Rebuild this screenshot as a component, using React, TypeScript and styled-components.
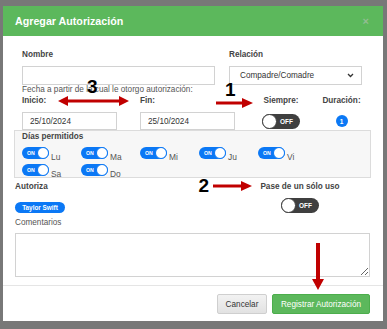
import React from "react";
import styled, { createGlobalStyle } from "styled-components";

const GlobalStyle = createGlobalStyle`
  html, body {
    margin: 0;
    padding: 0;
    background: #787878;
  }
  body {
    font-family: "Liberation Sans", Arial, sans-serif;
  }
  * {
    box-sizing: border-box;
  }
`;

const Backdrop = styled.div`
  position: relative;
  width: 387px;
  height: 329px;
  background: #787878;
  padding: 6px 0 0 3px;
  overflow: hidden;
`;

const Modal = styled.div`
  width: 380px;
  height: 315px;
  background: #fff;
  display: flex;
  flex-direction: column;
`;

const Header = styled.div`
  height: 30px;
  flex: none;
  background: #5cb85c;
  display: flex;
  align-items: center;
  justify-content: space-between;
  padding: 0 14px 0 12px;
`;

const Title = styled.h4`
  margin: 0;
  font-size: 10.7px;
  font-weight: 700;
  color: #fff;
`;

const Close = styled.span`
  font-size: 11px;
  font-weight: 700;
  color: #93bd93;
  line-height: 1;
`;

const Body = styled.div`
  flex: 1;
  padding: 13px 13px 0 12px;
  display: flex;
  flex-direction: column;
`;

const Top = styled.div`
  padding: 0 8px 0 7px;
`;

const NameRow = styled.div`
  display: grid;
  grid-template-columns: 193px 133px;
  column-gap: 14px;
`;

const Label = styled.label<{ $center?: boolean; $light?: boolean }>`
  display: block;
  font-size: 8.2px;
  line-height: 11px;
  font-weight: ${({ $light }) => ($light ? 400 : 700)};
  color: ${({ $light }) => ($light ? "#555" : "#444")};
  text-align: ${({ $center }) => ($center ? "center" : "left")};
`;

const Input = styled.div<{ $h: number; $w?: number }>`
  height: ${({ $h }) => $h}px;
  width: ${({ $w }) => ($w ? `${$w}px` : "100%")};
  border: 1px solid #d2d2d2;
  background: #fff;
  font-size: 8.2px;
  color: #333;
  display: flex;
  align-items: center;
  padding: 0 7px;
`;

const Select = styled(Input)`
  justify-content: space-between;
  padding: 0 7px 0 10px;
`;

const Stack = styled.div<{ $gap: number }>`
  display: flex;
  flex-direction: column;
  align-items: stretch;
  gap: ${({ $gap }) => $gap}px;
`;

const Note = styled.div`
  font-size: 8.2px;
  line-height: 10px;
  color: #555;
`;

const DateRow = styled.div`
  display: grid;
  grid-template-columns: 118px 101px 80px 41px;
  align-items: start;
`;

const Centered = styled.div`
  display: flex;
  justify-content: center;
  align-items: center;
  height: 18px;
`;

const Switch = styled.div<{ $on?: boolean; $size?: "sm" | "md" }>`
  position: relative;
  width: ${({ $size }) => ($size === "sm" ? 27 : 38)}px;
  height: ${({ $size }) => ($size === "sm" ? 12 : 15)}px;
  border-radius: 8px;
  background: ${({ $on }) => ($on ? "#0b78f5" : "#3f3f3f")};
  flex: none;
  display: flex;
  align-items: center;
  justify-content: ${({ $on }) => ($on ? "flex-start" : "flex-end")};
  padding: ${({ $on, $size }) =>
    $on ? "0 0 0 5px" : $size === "sm" ? "0 5px 0 0" : "0 7px 0 0"};
  font-size: ${({ $size }) => ($size === "sm" ? 5.2 : 6.5)}px;
  font-weight: 700;
  color: #fff;
`;

const Knob = styled.span<{ $on?: boolean; $size?: "sm" | "md" }>`
  position: absolute;
  top: 0;
  ${({ $on }) => ($on ? "right: 0;" : "left: 0;")}
  width: ${({ $size }) => ($size === "sm" ? 12 : 15)}px;
  height: ${({ $size }) => ($size === "sm" ? 12 : 15)}px;
  border-radius: 50%;
  background: #fff;
  border: 1px solid ${({ $on }) => ($on ? "#0b78f5" : "#3f3f3f")};
`;

const Badge = styled.span`
  width: 12px;
  height: 12px;
  border-radius: 50%;
  background: #0b78f5;
  color: #fff;
  font-size: 6.5px;
  font-weight: 700;
  display: flex;
  align-items: center;
  justify-content: center;
`;

const Days = styled.div`
  margin: 0 -1px;
  border: 1px solid #dcdcdc;
  background: #f7f7f7;
  padding: 0 7px 2px 7px;
  height: 48px;
`;

const DaysGrid = styled.div`
  display: grid;
  grid-template-columns: repeat(5, 59px);
  row-gap: 5px;
  margin-top: 5px;
`;

const Day = styled.div`
  display: flex;
  align-items: flex-end;
  gap: 2px;
  height: 12px;
`;

const DayName = styled.span`
  font-size: 8.4px;
  line-height: 8px;
  color: #555;
  transform: translateY(2px);
`;

const AuthRow = styled.div`
  display: grid;
  grid-template-columns: 245px 80px;
  margin-top: 3px;
  row-gap: 4px;
  align-items: center;
`;

const Pill = styled.span`
  display: inline-flex;
  align-items: center;
  justify-content: center;
  width: 50px;
  height: 11px;
  border-radius: 6px;
  background: #0b78f5;
  color: #fff;
  font-size: 6.4px;
  font-weight: 700;
`;

const ToggleCell = styled.div`
  display: flex;
  justify-content: center;
  height: 16px;
  align-items: center;
`;

const Comments = styled.textarea`
  display: block;
  margin-top: 5px;
  width: 100%;
  height: 44px;
  border: 1px solid #d2d2d2;
  font-family: inherit;
  font-size: 8.2px;
  padding: 4px;
`;

const Footer = styled.div`
  flex: none;
  margin-top: auto;
  border-top: 1px solid #e5e5e5;
  padding: 8px 13px 7px 0;
  display: flex;
  justify-content: flex-end;
  gap: 5px;
`;

const Button = styled.button<{ $primary?: boolean }>`
  height: 20px;
  width: ${({ $primary }) => ($primary ? 98 : 50)}px;
  border: 1px solid ${({ $primary }) => ($primary ? "#4cae4c" : "#cfcfcf")};
  border-radius: 2px;
  background: ${({ $primary }) =>
    $primary ? "#5cb85c" : "linear-gradient(#f2f2f2, #e2e2e2)"};
  color: ${({ $primary }) => ($primary ? "#fff" : "#333")};
  font-family: inherit;
  font-size: 8.2px;
  padding: 0;
`;

const Annotations = styled.svg`
  position: absolute;
  left: 0;
  top: 0;
  pointer-events: none;
`;

const Marker = styled.span<{ $x: number; $y: number }>`
  position: absolute;
  left: ${({ $x }) => $x}px;
  top: ${({ $y }) => $y}px;
  font-size: 19px;
  line-height: 1;
  font-weight: 700;
  color: #000;
`;

const Toggle: React.FC<{ on?: boolean; size?: "sm" | "md" }> = ({
  on,
  size = "md",
}) => (
  <Switch $on={on} $size={size}>
    {on ? "ON" : "OFF"}
    <Knob $on={on} $size={size} />
  </Switch>
);

const days = [
  ["Lu", "Ma", "Mi", "Ju", "Vi"],
  ["Sa", "Do"],
];

const RED = "#c00000";

export default function App() {
  return (
    <>
      <GlobalStyle />
      <Backdrop>
        <Modal>
          <Header>
            <Title>Agregar Autorización</Title>
            <Close>×</Close>
          </Header>
          <Body>
            <Top>
              <NameRow>
                <Stack $gap={6}>
                  <Label>Nombre</Label>
                  <Input $h={19} />
                </Stack>
                <Stack $gap={6}>
                  <Label>Relación</Label>
                  <Select $h={19}>
                    Compadre/Comadre
                    <svg width="7" height="5" viewBox="0 0 7 5">
                      <path
                        d="M1 1l2.5 2.5L6 1"
                        fill="none"
                        stroke="#333"
                        strokeWidth="1.3"
                      />
                    </svg>
                  </Select>
                </Stack>
              </NameRow>
              <Note>Fecha a partir de la cual le otorgo autorización:</Note>
              <DateRow>
                <Stack $gap={6}>
                  <Label>Inicio:</Label>
                  <Input $h={18} $w={95}>
                    25/10/2024
                  </Input>
                </Stack>
                <Stack $gap={6}>
                  <Label>Fin:</Label>
                  <Input $h={18} $w={95}>
                    25/10/2024
                  </Input>
                </Stack>
                <Stack $gap={6}>
                  <Label $center>Siempre:</Label>
                  <Centered>
                    <Toggle />
                  </Centered>
                </Stack>
                <Stack $gap={6}>
                  <Label $center>Duración:</Label>
                  <Centered>
                    <Badge>1</Badge>
                  </Centered>
                </Stack>
              </DateRow>
            </Top>

            <Days>
              <Label>Días permitidos</Label>
              <DaysGrid>
                {days.flat().map((d) => (
                  <Day key={d}>
                    <Toggle on size="sm" />
                    <DayName>{d}</DayName>
                  </Day>
                ))}
              </DaysGrid>
            </Days>

            <AuthRow>
              <Label>Autoriza</Label>
              <Label $center>Pase de un sólo uso</Label>
              <div>
                <Pill>Taylor Swift</Pill>
              </div>
              <ToggleCell>
                <Toggle />
              </ToggleCell>
            </AuthRow>

            <Label $light style={{ marginTop: 3 }}>
              Comentarios
            </Label>
            <Comments />
          </Body>
          <Footer>
            <Button>Cancelar</Button>
            <Button $primary>Registrar Autorización</Button>
          </Footer>
        </Modal>

        <Annotations width="387" height="329" viewBox="0 0 387 329">
          <g fill={RED} stroke={RED}>
            <line x1="66" y1="101" x2="121" y2="101" strokeWidth="3" />
            <polygon points="58,101 68,96 68,106" stroke="none" />
            <polygon points="129,101 119,96 119,106" stroke="none" />
            <line x1="216" y1="103" x2="244" y2="103" strokeWidth="3" />
            <polygon points="253,103 242,98 242,108" stroke="none" />
            <line x1="213" y1="186" x2="243" y2="186" strokeWidth="3" />
            <polygon points="252,186 241,181 241,191" stroke="none" />
            <line x1="318" y1="243" x2="318" y2="281" strokeWidth="4" />
            <polygon points="318,290 312,279 324,279" stroke="none" />
          </g>
        </Annotations>
        <Marker $x={87} $y={76.5}>3</Marker>
        <Marker $x={225} $y={79.5}>1</Marker>
        <Marker $x={198.5} $y={175.5}>2</Marker>
      </Backdrop>
    </>
  );
}
